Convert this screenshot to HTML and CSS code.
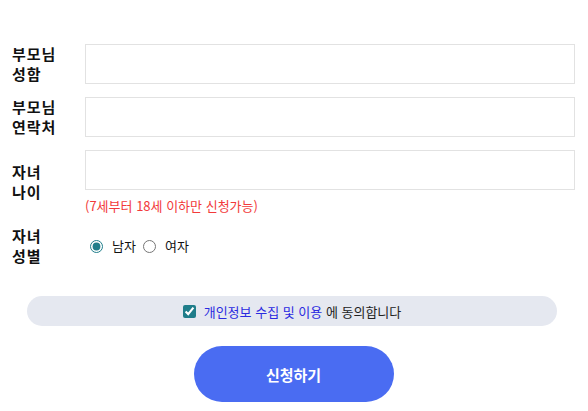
FILE: index.html
```html
<!DOCTYPE html>
<html lang="ko">
<head>
<meta charset="utf-8">
<link rel="stylesheet" href="styles.css">
</head>
<body>
<form class="form">
  <div class="row">
    <label class="label">부모님<br>성함</label>
    <div class="field"><input class="text" type="text"></div>
  </div>
  <div class="row">
    <label class="label">부모님<br>연락처</label>
    <div class="field"><input class="text" type="text"></div>
  </div>
  <div class="row">
    <label class="label">자녀<br>나이</label>
    <div class="field">
      <input class="text" type="text">
      <p class="hint">(7세부터 18세 이하만 신청가능)</p>
    </div>
  </div>
  <div class="row">
    <label class="label">자녀<br>성별</label>
    <div class="field radios">
      <input type="radio" name="g" id="m" checked><label for="m" class="opt">남자</label>
      <input type="radio" name="g" id="f"><label for="f" class="opt">여자</label>
    </div>
  </div>
  <div class="agree">
    <input type="checkbox" id="ag" checked><label for="ag" class="agree-text"><span class="link">개인정보 수집 및 이용</span> 에 동의합니다</label>
  </div>
  <div class="actions">
    <button type="button" class="submit">신청하기</button>
  </div>
</form>
</body>
</html>
```
FILE: styles.css
```css
html, body {
  margin: 0;
  padding: 0;
  background: #fff;
}
body {
  font-family: "Noto Sans CJK KR", "Noto Sans", sans-serif;
  color: #111;
}
.form {
  padding: 44px 13px 0 12px;
  display: flex;
  flex-direction: column;
}
.row {
  display: grid;
  grid-template-columns: 73px 1fr;
  align-items: center;
  margin-bottom: 13px;
}
.row:nth-child(3) {
  margin-bottom: 12px;
}
.label {
  font-size: 15px;
  font-weight: 700;
  line-height: 20px;
  letter-spacing: 1px;
  color: #111;
}
.text {
  display: block;
  box-sizing: border-box;
  width: 100%;
  height: 40px;
  margin: 0;
  border: 1px solid #e2e2e2;
  background: #fff;
  outline: none;
}
.hint {
  margin: 8px 0 0;
  font-size: 13px;
  line-height: 16px;
  color: #f23a3a;
}
.radios {
  display: flex;
  align-items: center;
  font-size: 13px;
  line-height: 18px;
}
.radios input {
  width: 13px;
  height: 13px;
  margin: 0 0 0 5px;
  accent-color: #1f7d8a;
}
.opt {
  margin-left: 9px;
  margin-right: 2px;
  color: #111;
}
.agree {
  margin: 17px 18px 0 15px;
  height: 30px;
  border-radius: 15px;
  background: #e5e8f0;
  display: flex;
  align-items: center;
  justify-content: center;
  font-size: 13px;
}
.agree input {
  width: 13px;
  height: 13px;
  margin: 0 8px 0 0;
  accent-color: #1f7d8a;
}
.agree-text {
  color: #222;
}
.link {
  color: #2a2ae0;
}
.actions {
  display: flex;
  justify-content: center;
  margin-top: 20px;
}
.submit {
  width: 200px;
  height: 56px;
  border: none;
  border-radius: 28px;
  background: #4a6cf2;
  color: #fff;
  font-family: "Noto Sans CJK KR", sans-serif;
  font-size: 15px;
  font-weight: 700;
}
```
